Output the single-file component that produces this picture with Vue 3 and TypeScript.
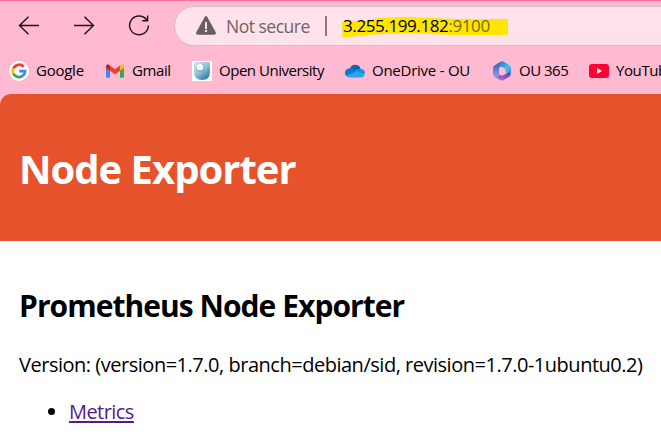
<script setup lang="ts">
interface Bookmark {
  id: string
  label: string
}

const bookmarks: Bookmark[] = [
  { id: 'google', label: 'Google' },
  { id: 'gmail', label: 'Gmail' },
  { id: 'university', label: 'Open University' },
  { id: 'onedrive', label: 'OneDrive - OU' },
  { id: 'office', label: 'OU 365' },
  { id: 'youtube', label: 'YouTube' },
]
</script>

<template>
  <div class="window">
    <div class="toolbar">
      <nav class="controls">
        <svg class="control" viewBox="0 0 22 22"><path d="M21 11.5H1.5M10.5 2.8 1.5 11.5l9 8.7" /></svg>
        <svg class="control" viewBox="0 0 22 22"><path d="M1 11.5h19.5M11.5 2.8l9 8.7-9 8.7" /></svg>
        <svg class="control" viewBox="0 0 22 22"><path d="M19 6.4A9.4 9.4 0 1 0 20.4 11.500M19.600 1.500v5.200h-5.400" /></svg>
      </nav>
      <div class="address">
        <svg class="warning" viewBox="0 0 20 19">
          <path d="M8.700 1Q10-.9 11.300 1L19.600 16.100Q20.600 18.600 18 18.700H2Q-.6 18.600.4 16.100Z" fill="#666064" />
          <path d="M10 6.700v5.500" stroke="#ffe2ea" stroke-width="2" stroke-linecap="round" />
          <circle cx="10" cy="15" r="1.200" fill="#ffe2ea" />
        </svg>
        <span class="status">Not secure</span>
        <span class="divider"></span>
        <span class="url">
          <svg class="marker" viewBox="0 0 167 22"><path d="M0 5 26 3.500 37 .8 65 0l48 2h53v16H112L66 16 31 17.500.5 20.800Z" fill="#ffe500" /></svg>
          <span class="url-text">3.255.199.182<span class="port">:9100</span></span>
        </span>
      </div>
    </div>

    <div class="bookmarks">
      <div v-for="b in bookmarks" :key="b.id" class="bookmark" :class="b.id">
        <svg v-if="b.id === 'google'" class="icon" viewBox="0 0 20 20">
          <circle cx="10" cy="10" r="10" fill="#fff" />
          <g fill="none" stroke-width="2.800">
            <path d="M14.600 5.700A6.200 6.200 0 0 0 4.400 7.300" stroke="#ea4335" />
            <path d="M4.400 7.200a6.200 6.200 0 0 0 0 5.600" stroke="#fbbc05" />
            <path d="M4.400 12.700a6.200 6.200 0 0 0 9.500 1.900" stroke="#34a853" />
            <path d="M10.200 10.100h5.900a6.200 6.200 0 0 1-2.200 4.600" stroke="#4285f4" />
          </g>
        </svg>
        <svg v-else-if="b.id === 'gmail'" class="icon" viewBox="0 0 20 20">
          <path d="M1 6v9.500q0 1.300 1.300 1.300H5V9Z" fill="#4285f4" />
          <path d="M15 9v7.800h2.700q1.300 0 1.300-1.300V6Z" fill="#34a853" />
          <path d="M5 4.500 10 8.300l5-3.800v5.300l-5 3.800-5-3.800Z" fill="#ea4335" />
          <path d="M1 6Q1 3.300 3.200 3.300L5 4.500v5.300L1 7Z" fill="#c5221f" />
          <path d="M15 4.500l1.500-1.100Q19 3.300 19 6v1l-4 2.800Z" fill="#fbbc04" />
        </svg>
        <svg v-else-if="b.id === 'university'" class="icon" viewBox="0 0 20 20">
          <defs>
            <linearGradient id="shield" x1="0" y1="0" x2=".7" y2="1">
              <stop stop-color="#d3e8f0" /><stop offset=".55" stop-color="#8dc2d9" /><stop offset="1" stop-color="#2f7aa3" />
            </linearGradient>
          </defs>
          <path d="M0 0h20v20H0Z" fill="#fff" />
          <path d="M2 1h16v10q-.2 8-8 8t-8-8Z" fill="url(#shield)" />
          <circle cx="8.600" cy="6.800" r="3.900" fill="#5faac9" />
          <circle cx="8.100" cy="6.300" r="3.300" fill="#fff" />
        </svg>
        <svg v-else-if="b.id === 'onedrive'" class="icon" viewBox="0 0 20 20">
          <path d="M5.300 7.100A5.500 5.500 0 0 1 15.700 8L12 12 4.700 7.200Z" fill="#0967bd" />
          <path d="M4.800 7.200Q7 6.900 9 8.200l4 3-9.500 4.500Q0 15 0 11.700q0-4 4.800-4.500Z" fill="#087bd4" />
          <path d="M15 8q5 .1 5 4.300l-3 2-7.500-4Q11.500 7.900 15 8Z" fill="#1490df" />
          <path d="M1.500 14.800 11.600 10l8.200 3.500Q19 16.500 16 16.500H5q-2.300 0-3.500-1.700Z" fill="#28a8ea" />
        </svg>
        <svg v-else-if="b.id === 'office'" class="icon" viewBox="0 0 20 20">
          <defs>
            <linearGradient id="officeLeft" x1="0" y1="0" x2="0" y2="1"><stop stop-color="#305da9" /><stop offset="1" stop-color="#9b98f0" /></linearGradient>
            <linearGradient id="officeTop" x1="0" y1="0" x2="1" y2="1"><stop stop-color="#326fb5" /><stop offset=".6" stop-color="#45c3ee" /><stop offset="1" stop-color="#347cdd" /></linearGradient>
            <linearGradient id="officeBase" x1="0" y1="1" x2="1" y2="0"><stop stop-color="#bb75d4" /><stop offset="1" stop-color="#6541a5" /></linearGradient>
          </defs>
          <path d="M9 .6 2.600 4.400Q1 5.400 1 7.300v6Q1 16 3.500 16.300q3.500.2 3.500-3V8q0-1.700 1.500-2.500L12 3.500Z" fill="url(#officeLeft)" />
          <path d="M8.500.9q1.700-1.200 3.400-.2l5.600 3.500Q19 5.200 19 7v6.200l-5.500-2V9Q13.500 7.500 12 6.700L7.500 5Q6.500 2.500 8.500.9Z" fill="url(#officeTop)" />
          <path d="M2 15.700q4.700 1.500 5-2.500l1.500 1q1.500.8 3 0l4.500-2.600q3 .5 2.500 2.500-.2 1-1.200 1.700l-5.500 3.300q-1.800 1-3.600 0Z" fill="url(#officeBase)" />
        </svg>
        <svg v-else class="icon" viewBox="0 0 20 20">
          <rect y="3" width="20" height="14" rx="3" fill="#f03" />
          <path d="m8 7 5 3-5 3Z" fill="#fff" />
        </svg>
        <span class="label">{{ b.label }}</span>
      </div>
    </div>

    <div class="page">
      <header><h1>Node Exporter</h1></header>
      <main>
        <h2>Prometheus Node Exporter</h2>
        <p>Version: (version=1.7.0, branch=debian/sid, revision=1.7.0-1ubuntu0.2)</p>
        <ul><li><a href="#">Metrics</a></li></ul>
      </main>
    </div>
  </div>
</template>

<style>
body { margin: 0; overflow: hidden; }
</style>

<style scoped>
.window {
  width: 661px;
  height: 447px;
  box-sizing: border-box;
  overflow: hidden;
  border-top: 1px solid #ff6d9b;
  background: #ffb9d0;
  font-family: 'Open Sans', 'Noto Sans', sans-serif;
  color: #000;
}
.toolbar { display: flex; height: 50px; padding-top: 5px; box-sizing: border-box; }
.controls { display: flex; width: 174px; flex: none; box-sizing: border-box; padding: 8px 0 0 18px; gap: 33px; }
.control { width: 22px; height: 22px; fill: none; stroke: #1b1117; stroke-width: 1.4; }
.address {
  display: flex;
  align-items: center;
  width: 520px;
  height: 40px;
  flex: none;
  box-sizing: border-box;
  border: 1px solid #d8bec8;
  border-radius: 20px;
  background: #ffe2ea;
  padding-left: 21px;
}
.warning { width: 20px; height: 19px; flex: none; margin-bottom: 1px; }
.status { width: 99px; margin-left: 10px; padding-bottom: 1px; flex: none; font-size: 17.5px; letter-spacing: -.5px; color: #706267; white-space: nowrap; }
.divider { width: 2px; height: 20px; flex: none; background: #8c7c82; }
.url { position: relative; margin-left: 15px; padding-left: 1px; padding-bottom: 2px; font-size: 17px; white-space: nowrap; }
.marker { position: absolute; left: 0; top: 3px; width: 167px; height: 22px; }
.url-text { position: relative; letter-spacing: -.4px; }
.port { color: #7a6c00; }
.bookmarks { display: flex; height: 43px; padding: 10px 0 0 9px; box-sizing: border-box; }
.bookmark { display: flex; height: 20px; align-items: center; flex: none; font-size: 15px; white-space: nowrap; }
.icon { width: 20px; height: 20px; flex: none; margin-right: 7px; }
.label { padding-bottom: 2px; }
.google { width: 96px; letter-spacing: -.25px; }
.gmail { width: 87px; letter-spacing: -.4px; }
.university { width: 153px; letter-spacing: -.48px; }
.onedrive { width: 147px; letter-spacing: -.25px; }
.office { width: 97px; letter-spacing: -.5px; }
.youtube { letter-spacing: -.4px; }
.page { height: 353px; overflow: hidden; border-radius: 11px 0 0; background: #fff; }
header { height: 147px; box-sizing: border-box; padding: 47px 19px 0; background: #e6522c; color: #fff; }
h1 { margin: 0; font-size: 40px; line-height: 56px; letter-spacing: -1px; white-space: nowrap; }
main { padding: 44px 19px 0; }
h2 { margin: 0; font-size: 30px; line-height: 42px; letter-spacing: -.96px; white-space: nowrap; }
p { margin: 24px 0 0; font-size: 20px; line-height: 28px; letter-spacing: -.48px; white-space: nowrap; }
ul { margin: 19px 0 0; padding-left: 50px; font-size: 20px; line-height: 28px; letter-spacing: -.55px; }
a { color: #551a8b; text-decoration-thickness: 2px; text-underline-offset: 2px; }
</style>
